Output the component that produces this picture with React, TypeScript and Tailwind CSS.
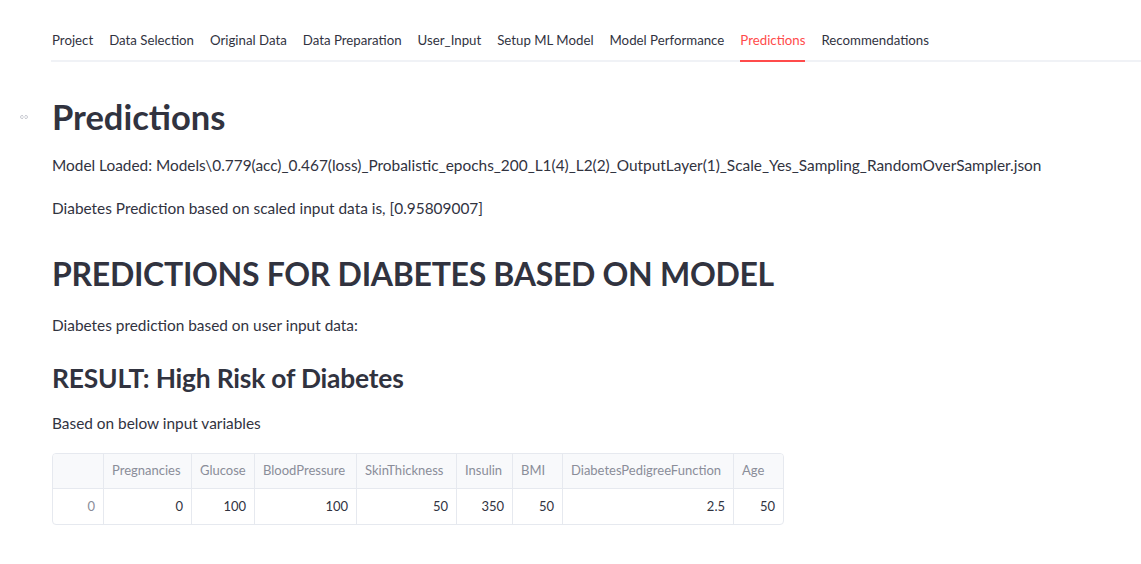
import React from 'react';

const tabs = [
    'Project', 'Data Selection', 'Original Data', 'Data Preparation', 'User_Input',
    'Setup ML Model', 'Model Performance', 'Predictions', 'Recommendations',
];

const columns = [
    { name: '', value: '0', width: 'w-[50px]', index: true },
    { name: 'Pregnancies', value: '0', width: 'w-[88px]' },
    { name: 'Glucose', value: '100', width: 'w-[63px]' },
    { name: 'BloodPressure', value: '100', width: 'w-[102px]' },
    { name: 'SkinThickness', value: '50', width: 'w-[100px]' },
    { name: 'Insulin', value: '350', width: 'w-[56px]' },
    { name: 'BMI', value: '50', width: 'w-[50px]' },
    { name: 'DiabetesPedigreeFunction', value: '2.5', width: 'w-[171px]' },
    { name: 'Age', value: '50', width: 'w-[50px]' },
];

export default function App() {
    return (
        <div className="min-h-screen w-full bg-white text-[#31333f] font-['Lato','Liberation_Sans',sans-serif]">
            <div className="pl-[52px]">

                {/* Tabs */}
                <div className="pt-[29px] flex gap-[16px] border-b-2 border-[#f0f2f6] ml-[-1px] pl-[1px]">
                    {tabs.map((tab) => (
                        <div
                            key={tab}
                            className={`text-[13.25px] leading-[22px] h-[33px] border-b-2 mb-[-2px] ${
                                tab === 'Predictions' ? 'text-[#ff4b4b] border-[#ff4b4b]' : 'border-transparent'
                            }`}
                        >
                            {tab}
                        </div>
                    ))}
                </div>

                {/* Page title */}
                <div className="relative mt-[33px]">
                    <svg className="absolute left-[-32px] top-[19px]" width="8" height="6" viewBox="0 0 8 6" fill="none" stroke="#c9cbd2" strokeWidth="1">
                        <path d="M3 1.5H2a1.5 1.5 0 0 0 0 3h1M5 1.5h1a1.5 1.5 0 0 1 0 3H5M2.5 3h3" />
                    </svg>
                    <h1 className="text-[34.5px] leading-[44px] font-bold">Predictions</h1>
                </div>

                <p className="mt-[14px] text-[15.4px] leading-[24px]">
                    Model Loaded: Models\0.779(acc)_0.467(loss)_Probalistic_epochs_200_L1(4)_L2(2)_OutputLayer(1)_Scale_Yes_Sampling_RandomOverSampler.json
                </p>
                <p className="mt-[19px] text-[15.4px] leading-[24px]">
                    Diabetes Prediction based on scaled input data is, [0.95809007]
                </p>

                <h2 className="mt-[30px] text-[32px] leading-[48px] font-bold tracking-[-0.3px]">PREDICTIONS FOR DIABETES BASED ON MODEL</h2>
                <p className="mt-[15px] text-[15.4px] leading-[24px]">Diabetes prediction based on user input data:</p>

                <h3 className="mt-[24px] text-[26.4px] leading-[34px] font-bold tracking-[-0.2px]">RESULT: High Risk of Diabetes</h3>
                <p className="mt-[16px] text-[15.4px] leading-[24px]">Based on below input variables</p>

                {/* Data table */}
                <div className="mt-[18px] inline-flex border border-[#e6e9ef] rounded-[4px] overflow-hidden text-[13px]">
                    {columns.map((col, i) => (
                        <div key={i} className={`${col.width} flex flex-col ${i > 0 ? 'border-l border-[#e6e9ef]' : ''}`}>
                            <div className="h-[35px] bg-[#f8f9fb] border-b border-[#e6e9ef] text-[#8a8d99] px-[8px] flex items-center whitespace-nowrap">
                                {col.name}
                            </div>
                            <div className={`h-[35px] px-[8px] flex items-center justify-end ${col.index ? 'text-[#8a8d99]' : ''}`}>
                                {col.value}
                            </div>
                        </div>
                    ))}
                </div>

            </div>
        </div>
    );
}
